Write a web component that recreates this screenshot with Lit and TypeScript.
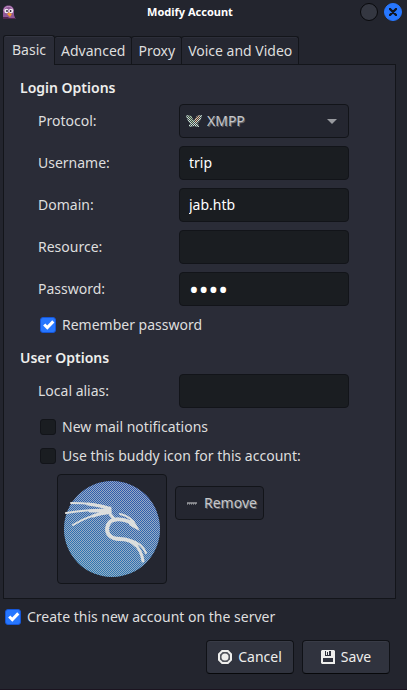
import { LitElement, html, css, svg } from "lit";
import { customElement } from "lit/decorators.js";

const checker = (id: string, color: string) => svg`
  <pattern id=${id} width="2" height="2" patternUnits="userSpaceOnUse">
    <rect width="1" height="1" fill=${color} />
    <rect x="1" y="1" width="1" height="1" fill=${color} />
  </pattern>`;

@customElement("app-root")
export class AppRoot extends LitElement {
  static styles = css`
    :host {
      display: block;
      min-height: 100vh;
      box-sizing: border-box;
      background: #23252e;
      border-bottom: 1px solid #1b1420;
      color: #dedede;
      font: 14px/20px "Noto Sans", sans-serif;
    }
    * { box-sizing: border-box; }
    button, input, select { font: inherit; color: inherit; margin: 0; }
    svg { display: block; flex: none; }

    .titlebar {
      display: grid;
      grid-template-columns: 48px 1fr 48px;
      align-items: center;
      height: 24px;
      padding: 0 5px 0 2px;
    }
    .title { margin: 0; text-align: center; font-size: 11px; font-weight: 700; line-height: 24px; color: #fff; padding-right: 24px; }
    .window-buttons { display: flex; gap: 6px; justify-content: flex-end; }
    .dot {
      width: 18px; height: 18px; padding: 0; border-radius: 50%;
      border: 1px solid #08090c; background: #343741;
      display: grid; place-items: center;
    }
    .dot.close { background: #2777ff; border-color: #2777ff; color: #101522; }

    .tabs { display: flex; align-items: flex-end; margin: 11px 0 0 3px; height: 29px; }
    .tab {
      height: 28px; padding: 0 6px; margin-left: -1px;
      background: #252731; color: #dedede;
      border: 1px solid #13151a; border-bottom: 0;
      border-radius: 3px 3px 0 0; white-space: nowrap;
      box-shadow: inset 0 1px #2c2e39;
    }
    .tab.active {
      height: 30px; padding: 0 8px 2px; margin: 0 0 -1px; position: relative;
      background: #2a2c37; box-shadow: inset 0 1px #343642;
    }
    .panel {
      margin: 0 11px 0 3px; padding: 13px 46px 14px 16px;
      background: #2a2c37; border: 1px solid #13151a;
    }
    .heading { margin: 0 0 6px; font-size: 14px; line-height: 20px; font-weight: 600; color: #eeeeec; }
    .rows { display: grid; gap: 8px; padding-left: 18px; }
    .row { display: grid; grid-template-columns: 141px 1fr; align-items: center; }
    .field {
      width: 100%; min-width: 0; height: 34px; padding: 0 9px 2px;
      background: #1a1d21; border: 1px solid #121419; border-radius: 4px;
      color: #fff; outline: none;
    }
    .field[type="password"] { font-size: 26px; padding-bottom: 0; }
    .combo { display: grid; align-items: center; }
    .combo > * { grid-area: 1 / 1; }
    .combo svg { pointer-events: none; margin-left: 7px; }
    .combo .arrow { justify-self: end; margin-right: 12px; }
    .combo .field { appearance: none; background: #242630; padding: 0 27px; }
    .dim, .combo .dim { color: #c6c7ca; text-shadow: 1px 1px #62656b; }

    .check { display: flex; align-items: center; gap: 6px; height: 22px; padding-left: 2px; white-space: nowrap; }
    .check input {
      appearance: none; width: 16px; height: 16px; flex: none;
      background: #1a1d21; border: 1px solid #121419; border-radius: 3px;
    }
    .check input:checked {
      border-color: #1556d8;
      background: #2777ff url("data:image/svg+xml,%3Csvg xmlns='http://www.w3.org/2000/svg' viewBox='0 0 14 14'%3E%3Cpath d='M3.2 6.5 6.3 9.6 12.3 3.4' fill='none' stroke='white' stroke-width='3'/%3E%3C/svg%3E") center / 14px 14px no-repeat;
    }
    .user { margin-top: 12px; }
    .stack { display: grid; gap: 7px; }
    .buddy { display: flex; gap: 8px; padding-left: 19px; align-items: flex-start; }
    .icon-button { width: 110px; height: 110px; padding: 0; display: grid; place-items: center; }
    .flat { background: #242630; border: 1px solid #121419; border-radius: 4px; }
    .remove { display: flex; align-items: center; gap: 7px; height: 34px; width: 89px; padding: 0 11px; margin-top: 12px; }

    .server { margin: 7px 0 0 3px; }
    .actions { display: flex; justify-content: flex-end; gap: 8px; margin: 12px 17px 0 0; padding-bottom: 15px; }
    .action {
      width: 88px; height: 34px; padding: 0; display: flex; align-items: center; justify-content: center; gap: 6px;
      background: #30333e; border: 1px solid #101217; border-bottom-color: #07080a; border-radius: 4px;
      box-shadow: inset 0 1px #383b46; color: #eeeeec;
    }
  `;

  private textRow(label: string, id: string, value = "", type = "text") {
    return html`<div class="row">
      <label for=${id}>${label}</label>
      <input class="field" id=${id} type=${type} .value=${value} autocomplete="off" />
    </div>`;
  }

  private check(label: string, checked = false) {
    return html`<label class="check"><input type="checkbox" .checked=${checked} />${label}</label>`;
  }

  render() {
    return html`
      <header class="titlebar">
        <svg width="14" height="15" viewBox="0 0 14 15">
          <path d="M1 14V6C1 2 3.500 .5 6.500 .5S12 2.500 12 6v4l1.500 4H1Z" fill="#8f5796" />
          <path d="M2 6C2 3 4 1.500 6.500 1.500S11 3 11 6" fill="none" stroke="#c194c6" />
          <path d="M1 12h5l1 1h6v1H1Z" fill="#50264f" />
          <circle cx="4.500" cy="6" r="2.200" fill="#f4edf4" /><circle cx="9" cy="6" r="2.200" fill="#f4edf4" />
          <circle cx="5" cy="6" r=".9" fill="#28182b" /><circle cx="8.600" cy="6" r=".9" fill="#28182b" />
          <path d="M5 9l2-1.500L10 9l-2 3Z" fill="#f39a32" />
        </svg>
        <h1 class="title">Modify Account</h1>
        <div class="window-buttons">
          <button class="dot" aria-label="Minimize"></button>
          <button class="dot close" aria-label="Close">
            <svg width="8" height="8" viewBox="0 0 8 8"><path d="M1 1l6 6M7 1 1 7" stroke="currentColor" stroke-width="2.400" stroke-linecap="round" /></svg>
          </button>
        </div>
      </header>

      <nav class="tabs" role="tablist">
        <button class="tab active" role="tab" aria-selected="true">Basic</button>
        <button class="tab" role="tab">Advanced</button>
        <button class="tab" role="tab">Proxy</button>
        <button class="tab" role="tab">Voice and Video</button>
      </nav>

      <main class="panel">
        <h2 class="heading">Login Options</h2>
        <div class="rows">
          <div class="row">
            <label for="protocol">Protocol:</label>
            <div class="combo">
              <select class="field dim" id="protocol"><option>XMPP</option></select>
              <svg width="16" height="16" viewBox="0 0 16 16">
                <defs>${checker("weave", "#3c4548")}</defs>
                <path d="M0 2l5 1 3 5 3-5 5-1c-1 5-3 7-5 9l2 1v2l-5-1-5 1v-2l2-1C3 9 1 7 0 2Z" fill="#cfe4da" />
                <path d="M9 7l2-4 3-.5c-1 4-2 6-5 8Z" fill="#f0b795" />
                <path d="M2 3l3 0 3 7-2 0Z" fill="#a9c9a0" />
                <path d="M0 2l5 1 3 5 3-5 5-1c-1 5-3 7-5 9l2 1v2l-5-1-5 1v-2l2-1C3 9 1 7 0 2Z" fill="url(#weave)" />
              </svg>
              <svg class="arrow" width="10" height="5" viewBox="0 0 10 5"><path d="M0 0h10L5 5Z" fill="#989a9f" /></svg>
            </div>
          </div>
          ${this.textRow("Username:", "username", "trip")}
          ${this.textRow("Domain:", "domain", "jab.htb")}
          ${this.textRow("Resource:", "resource")}
          ${this.textRow("Password:", "password", "pass", "password")}
          ${this.check("Remember password", true)}
        </div>

        <h2 class="heading user">User Options</h2>
        <div class="rows">
          ${this.textRow("Local alias:", "alias")}
          <div class="stack">
            ${this.check("New mail notifications")}
            ${this.check("Use this buddy icon for this account:")}
            <div class="buddy">
              <button class="icon-button flat" aria-label="Buddy icon">
                <svg width="96" height="96" viewBox="0 0 96 96">
                  <defs>
                    <linearGradient id="sky" x1="0.700" y1="0" x2="0.300" y2="1">
                      <stop offset="0" stop-color="#2f56ad" /><stop offset="1" stop-color="#2f7db4" />
                    </linearGradient>
                    ${checker("light", "#b4bcc8")}
                  </defs>
                  <circle cx="48" cy="48" r="48" fill="url(#sky)" />
                  <circle cx="48" cy="48" r="48" fill="url(#light)" opacity=".8" />
                  <g fill="none" stroke="#dcdedd" stroke-linecap="round" stroke-linejoin="round">
                    <path d="M7 22c14 0 27 1 39 5M2 32c14-2 29-4 43-3M9 44c11-7 23-11 36-12" stroke-width="2" />
                    <path d="M24 23c8 1 15 2 21 5M26 30h19M29 35c5-2 11-3 17-4" stroke-width="3" />
                    <path d="M46 27v6l5 6" stroke-width="3" />
                    <path d="M70 44C62 37 47 36 44 44c-3 8 2 14 12 14 8 0 12 2 16 6" stroke-width="4" />
                    <path d="M56 33c6 1 10 4 14 8" stroke-width="2" />
                    <path d="M66 59c8 2 13 6 16 13" stroke-width="2" />
                    <path d="M70 62c5 5 8 11 9 18" stroke-width="3" />
                  </g>
                  <path d="M66 38l6 5 4 7-6-3-5-3Z" fill="#dcdedd" />
                </svg>
              </button>
              <button class="remove flat dim">
                <svg width="10" height="3" viewBox="0 0 10 3"><path d="M0 1h10" stroke="#d6d7d8" stroke-width="1" /><path d="M0 2h10" stroke="#b0b2b5" stroke-dasharray="1 1" /></svg>
                Remove
              </button>
            </div>
          </div>
        </div>
      </main>

      <div class="server">${this.check("Create this new account on the server", true)}</div>
      <footer class="actions">
        <button class="action">
          <svg width="14" height="14" viewBox="0 0 14 14">
            <path d="M4.200 1h5.600L13 4.200v5.600L9.800 13H4.200L1 9.800V4.200Z" fill="#50535b" stroke="#eeeeec" stroke-width="2" />
            <circle cx="7" cy="7" r="3.500" fill="#eeeeec" />
          </svg>
          Cancel
        </button>
        <button class="action">
          <svg width="14" height="14" viewBox="0 0 14 14">
            <path d="M1 0h12l1 1v13H1l-1-1V1Z" fill="#eeeeec" />
            <path d="M2 8h10v4H2ZM4 1h6v5H4Z" fill="#30333e" /><path d="M5 1h3v4H5Z" fill="#eeeeec" /><path d="M6 2h1v3H6Z" fill="#30333e" />
          </svg>
          Save
        </button>
      </footer>
    `;
  }
}
